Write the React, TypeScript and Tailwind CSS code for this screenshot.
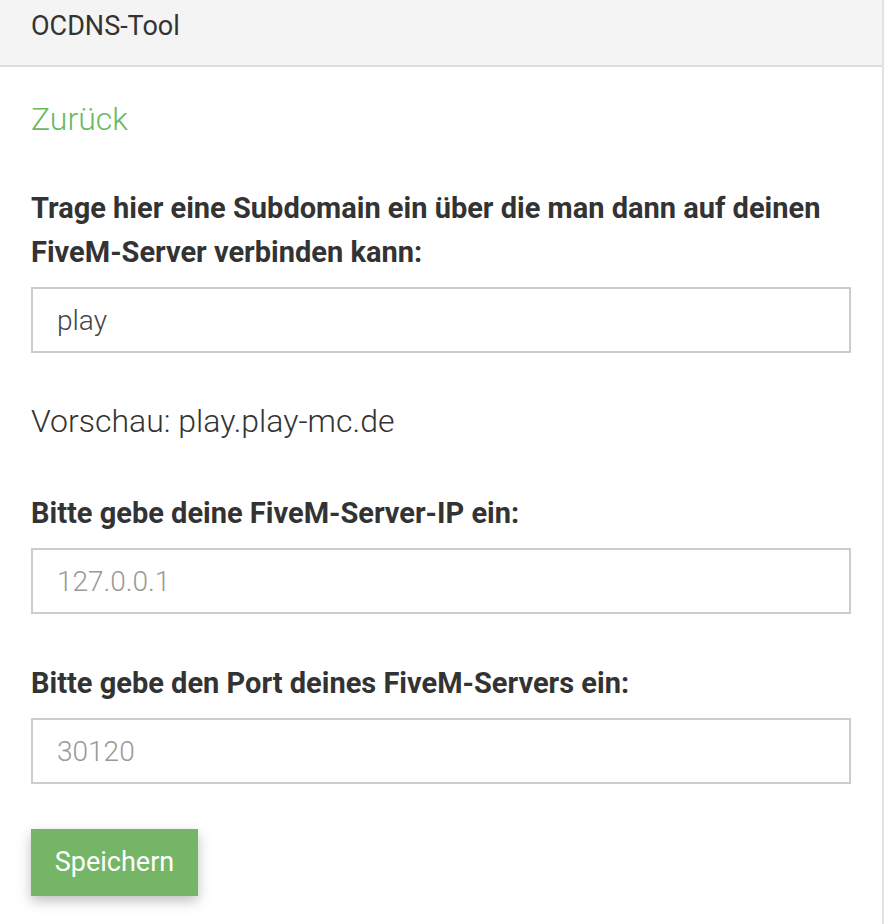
import React from 'react';

const labelCls = "block font-['Roboto',sans-serif] font-bold text-[29px] leading-[44px] text-[#333333] mb-[13px]";
const inputCls =
  "block w-full h-[66px] border-2 border-[#cccccc] bg-white pl-[24px] pr-4 font-['Roboto',sans-serif] font-light text-[28px] text-[#444444] placeholder:text-[#999999] outline-none";

export default function App() {
  return (
    <div className="w-[884px] min-h-[924px] bg-white">
      <div className="w-[884px] min-h-[924px] border-r-2 border-[#e3e3e3] bg-white">
        {/* Header */}
        <div className="h-[67px] bg-[#f4f4f4] border-b-2 border-[#dddddd] pl-[31px] pt-[8px]">
          <span className="font-['Roboto',sans-serif] font-normal text-[27px] leading-[36px] text-[#333333]">OCDNS-Tool</span>
        </div>

        {/* Body */}
        <div className="pl-[31px] pr-[31px] pt-[34px] pb-8">
          <a className="block font-['Roboto',sans-serif] font-light text-[32px] leading-[36px] text-[#6ab95e]">Zurück</a>

          <div className="mt-[49px]">
            <label className={labelCls}>Trage hier eine Subdomain ein über die man dann auf deinen FiveM-Server verbinden kann:</label>
            <input className={inputCls} defaultValue="play" />
          </div>

          <p className="mt-[50px] font-['Roboto',sans-serif] font-light text-[32px] leading-[36px] text-[#333333]">
            Vorschau: play.play-mc.de
          </p>

          <div className="mt-[52px]">
            <label className={labelCls}>Bitte gebe deine FiveM-Server-IP ein:</label>
            <input className={inputCls} placeholder="127.0.0.1" />
          </div>

          <div className="mt-[47px]">
            <label className={labelCls}>Bitte gebe den Port deines FiveM-Servers ein:</label>
            <input className={inputCls} placeholder="30120" />
          </div>

          <button className="mt-[45px] h-[67px] w-[167px] bg-[#74b666] text-white font-['Roboto',sans-serif] font-normal text-[27px] shadow-[0_5px_12px_rgba(0,0,0,0.25)]">
            Speichern
          </button>
        </div>
      </div>
    </div>
  );
}
